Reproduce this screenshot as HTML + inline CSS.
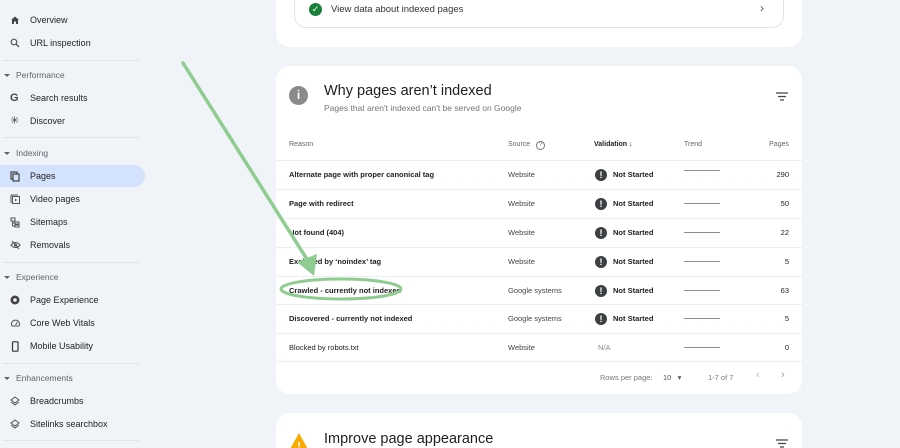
<!DOCTYPE html>
<html style="width:900px;height:448px;overflow:hidden"><head><style>
*{margin:0;padding:0;box-sizing:border-box}
html,body{width:900px;height:448px;overflow:hidden}
body{background:#f0f4f9;font-family:"Liberation Sans",Arial,sans-serif;color:#1f1f1f;position:relative}
.sb{position:absolute;left:0;top:0;width:146px}
.it{position:absolute;left:0;height:22px;width:145px;font-size:9px;line-height:22px;padding-left:30px;color:#1f1f1f}
.it svg{position:absolute;left:10px;top:6px}
.sec{position:absolute;left:16px;font-size:8.5px;color:#5f6368}
.sec:before{content:"";position:absolute;left:-12px;top:4px;border:3px solid transparent;border-top:3.5px solid #5f6368}
.dv{position:absolute;left:3px;width:136px;border-top:1px solid #e0e3e8}
.card{position:absolute;left:276px;width:526px;background:#fff;border-radius:14px}
.row{position:absolute;left:0;width:526px;height:29px;border-top:1px solid #eceef1;font-size:7.5px;line-height:28px}
.row span{position:absolute}
.r{left:13px;font-weight:bold}
.s{left:232px;color:#444}
.v{left:337px;font-weight:bold}
.ic{position:absolute;left:319px;top:8px;width:12px;height:12px;border-radius:50%;background:#3c4043;color:#fff;font-size:9px;line-height:12px;text-align:center;font-weight:bold}
.t{position:absolute;left:408px;top:13px;width:36px;border-top:1px solid #8a8e93}
.p{right:13px}
</style></head><body>
<div class="sb">
<div class="it" style="top:9px"><svg width="10" height="10" viewBox="0 0 10 10"><path d="M1 5L5 1.5 9 5H8v4H6V6.5H4V9H2V5z" fill="#444"/></svg>Overview</div>
<div class="it" style="top:32px"><svg width="10" height="10" viewBox="0 0 10 10"><circle cx="4" cy="4" r="2.8" fill="none" stroke="#555" stroke-width="1.2"/><path d="M6 6l3 3" stroke="#555" stroke-width="1.3"/></svg>URL inspection</div>
<div class="dv" style="top:60px"></div>
<div class="sec" style="top:70px">Performance</div>
<div class="it" style="top:87px"><span style="position:absolute;left:10px;font-weight:bold;font-size:11px;color:#444">G</span>Search results</div>
<div class="it" style="top:110px"><span style="position:absolute;left:10px;font-size:11px;color:#444">✳</span>Discover</div>
<div class="dv" style="top:137px"></div>
<div class="sec" style="top:148px">Indexing</div>
<div class="it" style="top:165px;background:#d3e3fd;border-radius:0 11px 11px 0"><svg width="10" height="11" viewBox="0 0 10 11"><rect x="1" y="1" width="6" height="7" fill="none" stroke="#333" stroke-width="1.1"/><rect x="3" y="3" width="6" height="7" fill="#d3e3fd" stroke="#333" stroke-width="1.1"/></svg>Pages</div>
<div class="it" style="top:188px"><svg width="10" height="11" viewBox="0 0 10 11"><rect x="2.5" y="2.5" width="7" height="7" fill="none" stroke="#555"/><path d="M1 1v8M1 1h7" stroke="#555"/><path d="M5 4.5v3l2-1.5z" fill="#555"/></svg>Video pages</div>
<div class="it" style="top:211px"><svg width="10" height="11" viewBox="0 0 10 11"><rect x="1" y="1" width="4" height="3" fill="none" stroke="#555"/><rect x="5" y="5" width="4" height="2" fill="none" stroke="#555"/><rect x="5" y="8" width="4" height="2" fill="none" stroke="#555"/><path d="M2.5 4v5H5M2.5 6H5" stroke="#555" fill="none"/></svg>Sitemaps</div>
<div class="it" style="top:234px"><svg width="11" height="10" viewBox="0 0 11 10"><path d="M1 5q4.5-5 9 0-4.5 5-9 0z" fill="none" stroke="#555" stroke-width="1.1"/><circle cx="5.5" cy="5" r="1.5" fill="#555"/><path d="M2 1l7 8" stroke="#555" stroke-width="1.1"/></svg>Removals</div>
<div class="dv" style="top:262px"></div>
<div class="sec" style="top:272px">Experience</div>
<div class="it" style="top:289px"><svg width="10" height="10" viewBox="0 0 10 10"><circle cx="5" cy="5" r="4.5" fill="#444"/><circle cx="5" cy="5" r="1.8" fill="#f0f4f9"/></svg>Page Experience</div>
<div class="it" style="top:312px"><svg width="11" height="10" viewBox="0 0 11 10"><path d="M2 8a4 4 0 1 1 7 0z" fill="none" stroke="#555"/><path d="M5.5 7l2-3" stroke="#555"/></svg>Core Web Vitals</div>
<div class="it" style="top:335px"><svg width="10" height="11" viewBox="0 0 10 11"><rect x="2.5" y="0.8" width="5.5" height="9.4" rx="0.8" fill="none" stroke="#333" stroke-width="1.2"/></svg>Mobile Usability</div>
<div class="dv" style="top:363px"></div>
<div class="sec" style="top:373px">Enhancements</div>
<div class="it" style="top:390px"><svg width="10" height="10" viewBox="0 0 10 10"><path d="M5 1L9 4 5 7 1 4z M1 6l4 3 4-3" fill="none" stroke="#555"/></svg>Breadcrumbs</div>
<div class="it" style="top:413px"><svg width="10" height="10" viewBox="0 0 10 10"><path d="M5 1L9 4 5 7 1 4z M1 6l4 3 4-3" fill="none" stroke="#555"/></svg>Sitelinks searchbox</div>
<div class="dv" style="top:440px"></div>
</div>

<div class="card" style="top:-20px;height:67px">
<div style="position:absolute;left:18px;top:0;width:490px;height:48px;border:1px solid #e3e3e3;border-top:none;border-radius:0 0 12px 12px"></div>
<div style="position:absolute;left:33px;top:23px;width:13px;height:13px;border-radius:50%;background:#188038;color:#fff;font-size:9px;line-height:13px;text-align:center">✓</div>
<div style="position:absolute;left:55px;top:24px;font-size:9.5px;color:#333">View data about indexed pages</div>
<div style="position:absolute;left:484px;top:21px;font-size:12px;color:#555">›</div>
</div>

<div class="card" style="top:66px;height:328px">
<div style="position:absolute;left:13px;top:20px;width:19px;height:19px;border-radius:50%;background:#8a8a8a;color:#fff;font-size:12px;font-weight:bold;line-height:19px;text-align:center">i</div>
<div style="position:absolute;left:48px;top:17px;font-size:14.5px;color:#1f1f1f">Why pages aren’t indexed</div>
<div style="position:absolute;left:48px;top:37px;font-size:8.5px;color:#757575">Pages that aren't indexed can't be served on Google</div>
<svg style="position:absolute;left:500px;top:26px" width="12" height="9" viewBox="0 0 12 9"><path d="M0 1h12M2 4.5h8M4 8h4" stroke="#444" stroke-width="1.3"/></svg>
<div style="position:absolute;top:75px;left:13px;font-size:7px;color:#666">Reason</div>
<div style="position:absolute;top:75px;left:232px;font-size:7px;color:#666">Source <span style="display:inline-block;width:9px;height:9px;border:1px solid #777;border-radius:50%;font-size:6px;line-height:7px;text-align:center;margin-left:4px">?</span></div>
<div style="position:absolute;top:75px;left:318px;font-size:7px;font-weight:bold">Validation ↓</div>
<div style="position:absolute;top:75px;left:408px;font-size:7px;color:#666">Trend</div>
<div style="position:absolute;top:75px;right:13px;font-size:7px;color:#666">Pages</div>
<div class="row" style="top:94px"><span class="r">Alternate page with proper canonical tag</span><span class="s">Website</span><div class="ic">!</div><span class="v">Not Started</span><div class="t" style="top:9px"></div><span class="p">290</span></div>
<div class="row" style="top:123px"><span class="r">Page with redirect</span><span class="s">Website</span><div class="ic">!</div><span class="v">Not Started</span><div class="t"></div><span class="p">50</span></div>
<div class="row" style="top:152px"><span class="r">Not found (404)</span><span class="s">Website</span><div class="ic">!</div><span class="v">Not Started</span><div class="t"></div><span class="p">22</span></div>
<div class="row" style="top:181px"><span class="r">Excluded by ‘noindex’ tag</span><span class="s">Website</span><div class="ic">!</div><span class="v">Not Started</span><div class="t"></div><span class="p">5</span></div>
<div class="row" style="top:210px"><span class="r">Crawled - currently not indexed</span><span class="s">Google systems</span><div class="ic">!</div><span class="v">Not Started</span><div class="t"></div><span class="p">63</span></div>
<div class="row" style="top:238px"><span class="r">Discovered - currently not indexed</span><span class="s">Google systems</span><div class="ic">!</div><span class="v">Not Started</span><div class="t"></div><span class="p">5</span></div>
<div class="row" style="top:267px;border-bottom:1px solid #eceef1"><span class="r" style="font-weight:normal">Blocked by robots.txt</span><span class="s">Website</span><span style="left:322px;color:#888">N/A</span><div class="t"></div><span class="p">0</span></div>
<div style="position:absolute;top:307px;left:324px;font-size:7.5px;color:#777">Rows per page:</div>
<div style="position:absolute;top:307px;left:387px;font-size:7.5px;color:#555">10 &nbsp;&nbsp;▾</div>
<div style="position:absolute;top:307px;left:432px;font-size:7.5px;color:#777">1-7 of 7</div>
<div style="position:absolute;top:303px;left:480px;font-size:11px;color:#bbb">‹</div>
<div style="position:absolute;top:303px;left:505px;font-size:11px;color:#999">›</div>
</div>

<div class="card" style="top:413px;height:35px;border-radius:14px 14px 0 0">
<svg style="position:absolute;left:13px;top:20px" width="20" height="18" viewBox="0 0 20 18"><path d="M10 0L20 18H0z" fill="#f9ab00"/><text x="10" y="16" font-size="10" fill="#fff" text-anchor="middle" font-family="Liberation Sans" font-weight="bold">!</text></svg>
<div style="position:absolute;left:48px;top:18px;font-size:14.5px">Improve page appearance</div>
<svg style="position:absolute;left:500px;top:26px" width="12" height="9" viewBox="0 0 12 9"><path d="M0 1h12M2 4.5h8M4 8h4" stroke="#444" stroke-width="1.3"/></svg>
</div>

<svg style="position:absolute;left:0;top:0" width="900" height="448">
<path d="M183 63L310 264" stroke="#8fcc8f" stroke-width="3.5" stroke-linecap="round"/>
<path d="M297 262L314 276 317 254z" fill="#8fcc8f"/>
<ellipse cx="341" cy="289" rx="60" ry="10" fill="none" stroke="#8fcc8f" stroke-width="3"/>
</svg>
</body></html>
